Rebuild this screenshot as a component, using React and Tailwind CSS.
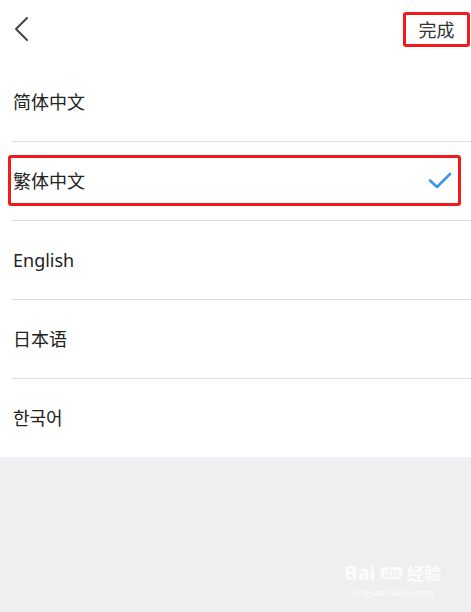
const languages = [
  { label: "简体中文" },
  { label: "繁体中文", selected: true },
  { label: "English" },
  { label: "日本语" },
  { label: "한국어" },
];

const font = {
  fontFamily: '"Noto Sans", "Noto Sans CJK SC", "Noto Sans CJK KR", sans-serif',
};

function BackIcon() {
  return (
    <svg width="16" height="26" viewBox="0 0 16 26" fill="none">
      <path d="M14 2 L3 13 L14 24" stroke="#444" strokeWidth="2" strokeLinecap="round" strokeLinejoin="round" />
    </svg>
  );
}

function CheckIcon() {
  return (
    <svg width="24" height="18" viewBox="0 0 24 18" fill="none">
      <path d="M2 8.5 L9 15 L22 2" stroke="#3d94ee" strokeWidth="2.6" strokeLinecap="round" strokeLinejoin="round" />
    </svg>
  );
}

export default function App() {
  return (
    <div className="w-[471px] h-[612px] bg-[#efeff1] flex flex-col overflow-hidden" style={font}>
      <div className="bg-white">
        {/* top bar */}
        <header className="h-[63px] flex items-center justify-between pl-[13px] pr-px">
          <button className="flex items-center pb-[5px]">
            <BackIcon />
          </button>
          <button className="relative -mt-[4px] h-[35px] w-[67px] border-[3px] border-[#f21b1b] rounded-[3px] flex items-center justify-center text-[18px] text-[#333] leading-none">
            完成
          </button>
        </header>

        <ul>
          {languages.map((lang, i) => (
            <li key={lang.label} className="relative">
              {i > 0 && <div className="ml-3 h-px bg-[#dedee0]" />}
              <div className="h-[78px] flex items-center justify-between pl-[13px] pr-[19px] text-[18px] text-[#222]">
                <span>{lang.label}</span>
                {lang.selected && <CheckIcon />}
              </div>
              {lang.selected && (
                <div className="absolute left-2 right-[10px] top-[14px] bottom-[14px] border-[3px] border-[#f21b1b] rounded-[3px]" />
              )}
            </li>
          ))}
        </ul>
      </div>

      {/* watermark */}
      <div className="flex-1 flex items-end justify-end pr-[30px] pb-[14px]">
        <div className="flex flex-col items-center text-white opacity-80">
          <div className="flex items-center gap-1 font-bold text-[20px] leading-none">
            <span>Bai</span>
            <span className="rounded-full bg-white text-[#efeff1] text-[12px] px-1">du</span>
            <span className="text-[17px]">经验</span>
          </div>
          <span className="text-[11px] leading-none mt-1" style={{ fontFamily: '"Liberation Serif", serif' }}>
            jingyan.baidu.com
          </span>
        </div>
      </div>
    </div>
  );
}
